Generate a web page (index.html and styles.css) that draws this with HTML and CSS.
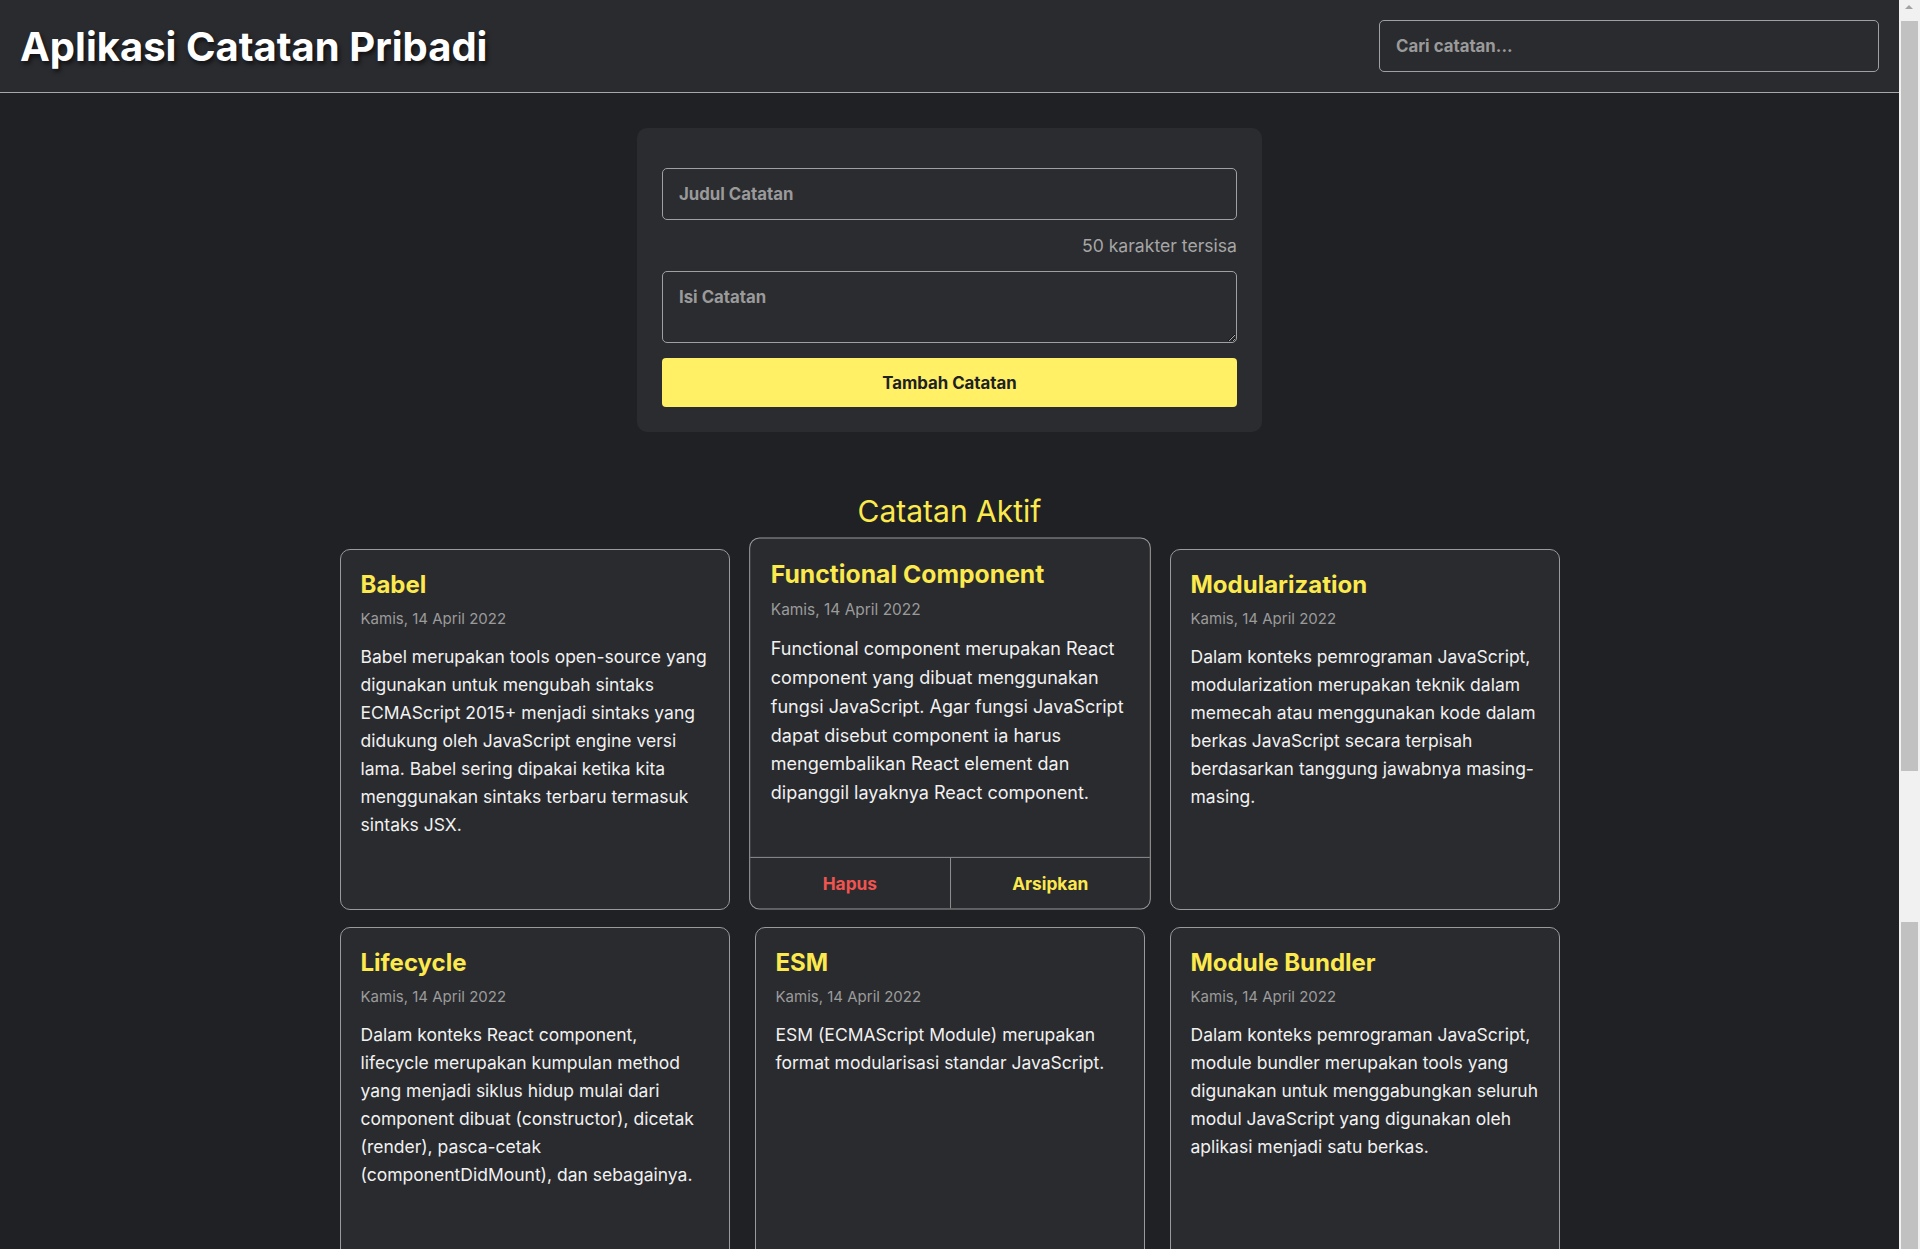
FILE: index.html
```html
<!DOCTYPE html>
<html lang="id">
<head>
    <meta charset="UTF-8">
    <title>Aplikasi Catatan Pribadi</title>
    <link rel="stylesheet" href="styles.css">
</head>
<body>
    <header class="app-header">
        <h1 class="app-title">Aplikasi Catatan Pribadi</h1>
        <input class="search-input" type="text" placeholder="Cari catatan...">
    </header>

    <main class="app-body">
        <form class="note-form" onsubmit="return false">
            <input class="form-input" type="text" placeholder="Judul Catatan">
            <p class="char-counter">50 karakter tersisa</p>
            <textarea class="form-input form-textarea" placeholder="Isi Catatan"></textarea>
            <button class="btn-add" type="submit">Tambah Catatan</button>
        </form>

        <h2 class="section-title">Catatan Aktif</h2>

        <div class="notes-list">
            <article class="note-card">
                <div class="note-content">
                    <h3 class="note-title">Babel</h3>
                    <p class="note-date">Kamis, 14 April 2022</p>
                    <p class="note-text">Babel merupakan tools open-source yang digunakan untuk mengubah sintaks ECMAScript 2015+ menjadi sintaks yang didukung oleh JavaScript engine versi lama. Babel sering dipakai ketika kita menggunakan sintaks terbaru termasuk sintaks JSX.</p>
                </div>
                <div class="note-actions">
                    <button class="note-btn btn-delete">Hapus</button>
                    <button class="note-btn btn-archive">Arsipkan</button>
                </div>
            </article>

            <article class="note-card hovered">
                <div class="note-content">
                    <h3 class="note-title">Functional Component</h3>
                    <p class="note-date">Kamis, 14 April 2022</p>
                    <p class="note-text">Functional component merupakan React component yang dibuat menggunakan fungsi JavaScript. Agar fungsi JavaScript dapat disebut component ia harus mengembalikan React element dan dipanggil layaknya React component.</p>
                </div>
                <div class="note-actions">
                    <button class="note-btn btn-delete">Hapus</button>
                    <button class="note-btn btn-archive">Arsipkan</button>
                </div>
            </article>

            <article class="note-card">
                <div class="note-content">
                    <h3 class="note-title">Modularization</h3>
                    <p class="note-date">Kamis, 14 April 2022</p>
                    <p class="note-text">Dalam konteks pemrograman JavaScript, modularization merupakan teknik dalam memecah atau menggunakan kode dalam berkas JavaScript secara terpisah berdasarkan tanggung jawabnya masing-masing.</p>
                </div>
                <div class="note-actions">
                    <button class="note-btn btn-delete">Hapus</button>
                    <button class="note-btn btn-archive">Arsipkan</button>
                </div>
            </article>

            <article class="note-card">
                <div class="note-content">
                    <h3 class="note-title">Lifecycle</h3>
                    <p class="note-date">Kamis, 14 April 2022</p>
                    <p class="note-text">Dalam konteks React component, lifecycle merupakan kumpulan method yang menjadi siklus hidup mulai dari component dibuat (constructor), dicetak (render), pasca-cetak (componentDidMount), dan sebagainya.</p>
                </div>
                <div class="note-actions">
                    <button class="note-btn btn-delete">Hapus</button>
                    <button class="note-btn btn-archive">Arsipkan</button>
                </div>
            </article>

            <article class="note-card">
                <div class="note-content">
                    <h3 class="note-title">ESM</h3>
                    <p class="note-date">Kamis, 14 April 2022</p>
                    <p class="note-text">ESM (ECMAScript Module) merupakan format modularisasi standar JavaScript.</p>
                </div>
                <div class="note-actions">
                    <button class="note-btn btn-delete">Hapus</button>
                    <button class="note-btn btn-archive">Arsipkan</button>
                </div>
            </article>

            <article class="note-card">
                <div class="note-content">
                    <h3 class="note-title">Module Bundler</h3>
                    <p class="note-date">Kamis, 14 April 2022</p>
                    <p class="note-text">Dalam konteks pemrograman JavaScript, module bundler merupakan tools yang digunakan untuk menggabungkan seluruh modul JavaScript yang digunakan oleh aplikasi menjadi satu berkas.</p>
                </div>
                <div class="note-actions">
                    <button class="note-btn btn-delete">Hapus</button>
                    <button class="note-btn btn-archive">Arsipkan</button>
                </div>
            </article>
        </div>
    </main>

    <!-- scrollbar dari screenshot -->
    <div class="fake-scrollbar" aria-hidden="true">
        <span class="scroll-arrow"></span>
        <span class="scroll-thumb"></span>
        <span class="scroll-thumb scroll-thumb-low"></span>
    </div>
</body>
</html>
```

FILE: styles.css
```css
* {
    box-sizing: border-box;
}

body {
    margin: 0 21px 0 0;
    background: #202124;
    color: #f1f1f1;
    font-family: Inter, "Noto Sans", sans-serif;
}

/* header */
.app-header {
    display: flex;
    justify-content: space-between;
    align-items: center;
    padding: 20px;
    background: #2a2b2f;
    border-bottom: 1px solid #a8a8a8;
}

.app-title {
    margin: 0;
    font-size: 40px;
    font-weight: 700;
    color: #fff;
    text-shadow: 2px 3px 4px rgba(0, 0, 0, 0.6);
}

.search-input {
    width: 500px;
    height: 52px;
    padding: 0 16px;
    background: transparent;
    border: 1px solid #a0a0a0;
    border-radius: 5px;
    color: #eee;
    font-family: inherit;
    font-size: 16.8px;
    font-weight: 700;
}

.search-input::placeholder,
.form-input::placeholder {
    color: #9a9a9a;
    font-weight: 700;
}

/* form */
.note-form {
    width: 625px;
    margin: 35px auto 0;
    padding: 40px 25px 25px;
    background: #2b2c30;
    border-radius: 10px;
}

.form-input {
    display: block;
    width: 100%;
    height: 52px;
    padding: 16px;
    background: transparent;
    border: 1px solid #a0a0a0;
    border-radius: 5px;
    color: #eee;
    font-family: inherit;
    font-size: 16.8px;
    font-weight: 700;
    line-height: 18px;
}

.form-textarea {
    height: 72px;
    resize: vertical;
}

.char-counter {
    margin: 15px 0 15px;
    text-align: right;
    color: #a6a6a6;
    font-size: 17.6px;
}

.btn-add {
    display: block;
    width: 100%;
    height: 49px;
    margin-top: 15px;
    background: #fff066;
    border: none;
    border-radius: 4px;
    color: #202124;
    font-family: inherit;
    font-size: 16.8px;
    font-weight: 700;
    cursor: pointer;
}

/* notes */
.app-body {
    padding-bottom: 40px;
}

.section-title {
    margin: 61px 0 20px;
    text-align: center;
    color: #fbe94d;
    font-size: 30px;
    font-weight: 400;
}

.notes-list {
    display: grid;
    grid-template-columns: repeat(3, 390px);
    column-gap: 25px;
    row-gap: 17px;
    justify-content: center;
}

.note-card {
    display: flex;
    flex-direction: column;
    background: #2a2b2f;
    border: 1px solid #9a9a9a;
    border-radius: 10px;
    transition: transform 0.2s;
}

.note-card.hovered {
    transform: translateY(-6px) scale(1.03);
}

.note-content {
    flex: 1;
    padding: 20px;
}

.note-title {
    margin: 0;
    color: #fbe94d;
    font-size: 24px;
    font-weight: 700;
}

.note-date {
    margin: 10px 0 0;
    color: #9b9b9b;
    font-size: 15px;
}

.note-text {
    margin: 15px 0 0;
    font-size: 17.5px;
    line-height: 28px;
}

.note-actions {
    display: flex;
    height: 50px;
    border-top: 1px solid #8c8c8c;
    opacity: 0;
}

.note-card.hovered .note-actions {
    opacity: 1;
}

.note-btn {
    flex: 1;
    background: transparent;
    border: none;
    font-family: inherit;
    font-size: 16.8px;
    font-weight: 700;
    cursor: pointer;
}

.btn-delete {
    color: #f0544f;
    border-right: 1px solid #8c8c8c;
}

.btn-archive {
    color: #fbe94d;
}

/* scrollbar */
.fake-scrollbar {
    position: fixed;
    top: 0;
    right: 0;
    width: 21px;
    height: 100%;
    background: #f1f1f1;
}

.scroll-arrow {
    position: absolute;
    top: 5px;
    left: 6px;
    border-left: 4px solid transparent;
    border-right: 4px solid transparent;
    border-bottom: 4px solid #a3a3a3;
}

.scroll-thumb {
    position: absolute;
    top: 21px;
    left: 2px;
    width: 17px;
    height: 750px;
    background: #c1c1c1;
}

.scroll-thumb-low {
    top: 922px;
    height: 340px;
}
```
